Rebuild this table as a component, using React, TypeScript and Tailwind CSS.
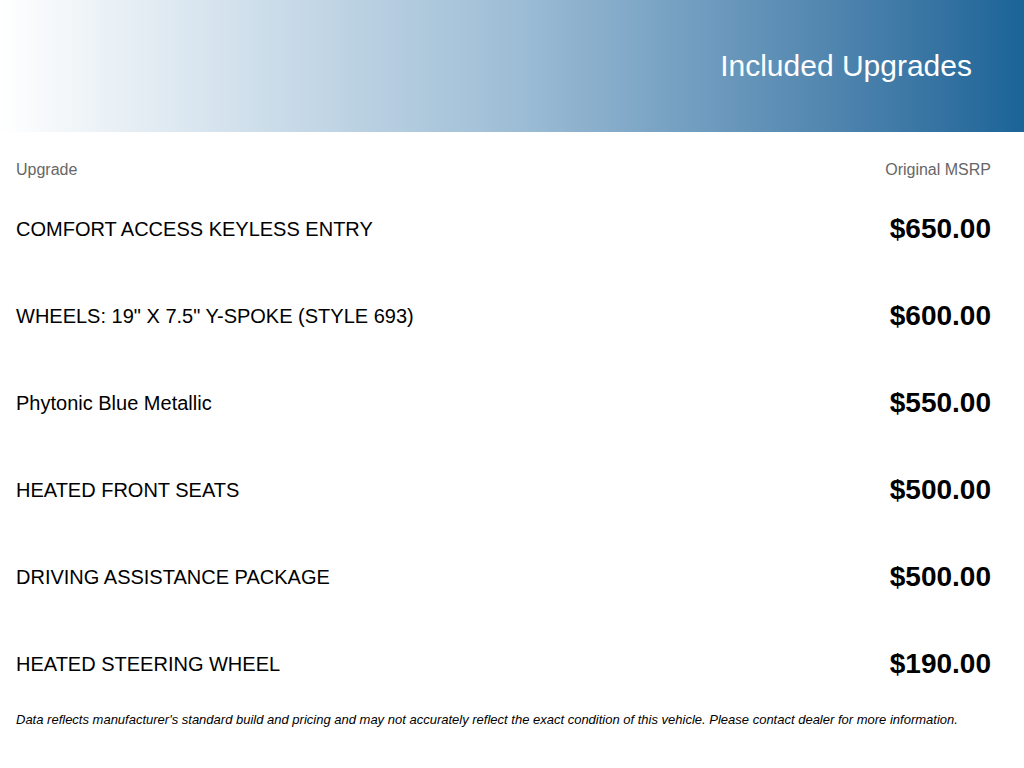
const upgrades = [
  { name: 'COMFORT ACCESS KEYLESS ENTRY', price: '$650.00' },
  { name: 'WHEELS: 19" X 7.5" Y-SPOKE (STYLE 693)', price: '$600.00' },
  { name: 'Phytonic Blue Metallic', price: '$550.00' },
  { name: 'HEATED FRONT SEATS', price: '$500.00' },
  { name: 'DRIVING ASSISTANCE PACKAGE', price: '$500.00' },
  { name: 'HEATED STEERING WHEEL', price: '$190.00' },
]

export default function App() {
  return (
    <div className="min-h-screen bg-white font-['Liberation_Sans',Arial,sans-serif] text-black">
      <div className="flex h-[132px] items-center justify-end bg-linear-to-r from-white via-[#9ebed6] to-[#1a6497] pr-[52px]">
        <h1 className="text-[30px] leading-none text-white">Included Upgrades</h1>
      </div>

      <div className="pl-4 pr-[33px] pt-[28px]">
        <div className="flex h-[20px] items-center justify-between text-[16px] text-[#666]">
          <span>Upgrade</span>
          <span>Original MSRP</span>
        </div>

        <div className="mt-[5px]">
          {upgrades.map((u, i) => (
            <div key={i} className="flex h-[87px] items-center justify-between">
              <span className="text-[20px]">{u.name}</span>
              <span className="text-[28px] font-bold">{u.price}</span>
            </div>
          ))}
        </div>

        <p className="mt-[5px] text-[13px] italic leading-4">
          Data reflects manufacturer's standard build and pricing and may not accurately reflect the exact condition of this vehicle. Please contact dealer for more information.
        </p>
      </div>
    </div>
  )
}
